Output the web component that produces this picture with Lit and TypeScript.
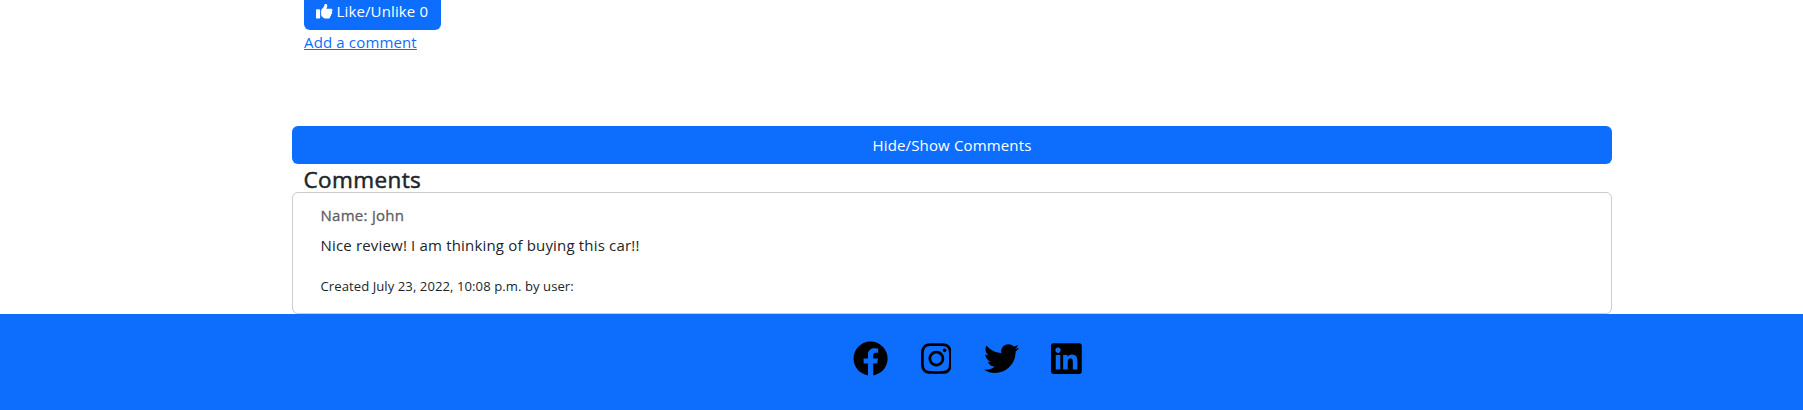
import { LitElement, html, css, svg } from "lit";
import { customElement, property, state } from "lit/decorators.js";

const ICONS: Record<string, { w: number; d: string }> = {
  like: {
    w: 512,
    d: "M313.4 32.9c26 5.2 42.9 30.5 37.7 56.5l-2.3 11.4c-5.3 26.7-15.1 52.1-28.8 75.2H464c26.5 0 48 21.5 48 48c0 18.5-10.5 34.6-25.9 42.6C497 275.4 504 288.9 504 304c0 23.4-16.8 42.9-38.9 47.1c4.4 7.3 6.9 15.8 6.9 24.9c0 21.3-13.9 39.4-33.1 45.6c.7 3.3 1.1 6.8 1.1 10.4c0 26.5-21.5 48-48 48H294.5c-19 0-37.5-5.6-53.3-16.1l-38.5-25.7C176 420.4 160 390.4 160 358.3V320 272 247.1c0-29.2 13.3-56.7 36-75l7.4-5.9c26.5-21.2 44.6-51 51.2-84.2l2.3-11.4c5.2-26 30.5-42.9 56.5-37.7zM32 192H96c17.7 0 32 14.3 32 32V448c0 17.7-14.3 32-32 32H32c-17.7 0-32-14.3-32-32V224c0-17.7 14.3-32 32-32z",
  },
  facebook: {
    w: 512,
    d: "M504 256C504 119 393 8 256 8S8 119 8 256c0 123.78 90.69 226.38 209.25 245V327.69h-63V256h63v-54.64c0-62.15 37-96.48 93.67-96.48 27.14 0 55.52 4.84 55.52 4.84v61h-31.28c-30.8 0-40.41 19.12-40.41 38.73V256h68.78l-11 71.69h-57.78V501C413.31 482.38 504 379.78 504 256z",
  },
  instagram: {
    w: 448,
    d: "M224.1 141c-63.6 0-114.9 51.3-114.9 114.9s51.3 114.9 114.9 114.9S339 319.5 339 255.9 287.7 141 224.1 141zm0 189.6c-41.1 0-74.7-33.5-74.7-74.7s33.5-74.7 74.7-74.7 74.7 33.5 74.7 74.7-33.6 74.7-74.7 74.7zm146.4-194.3c0 14.9-12 26.8-26.8 26.8-14.9 0-26.8-12-26.8-26.8s12-26.8 26.8-26.8 26.8 12 26.8 26.8zm76.1 27.2c-1.7-35.9-9.9-67.7-36.2-93.9-26.2-26.2-58-34.4-93.9-36.2-37-2.1-147.9-2.1-184.9 0-35.8 1.7-67.6 9.9-93.9 36.1s-34.4 58-36.2 93.9c-2.1 37-2.1 147.9 0 184.9 1.7 35.9 9.9 67.7 36.2 93.9s58 34.4 93.9 36.2c37 2.1 147.9 2.1 184.9 0 35.9-1.7 67.7-9.9 93.9-36.2 26.2-26.2 34.4-58 36.2-93.9 2.1-37 2.1-147.8 0-184.8zM398.8 388c-7.8 19.6-22.9 34.7-42.6 42.6-29.5 11.7-99.5 9-132.1 9s-102.7 2.6-132.1-9c-19.6-7.8-34.7-22.9-42.6-42.6-11.7-29.5-9-99.5-9-132.1s-2.6-102.7 9-132.1c7.8-19.6 22.9-34.7 42.6-42.6 29.5-11.7 99.5-9 132.1-9s102.7-2.6 132.1 9c19.6 7.8 34.7 22.9 42.6 42.6 11.7 29.5 9 99.5 9 132.1s2.7 102.7-9 132.1z",
  },
  twitter: {
    w: 512,
    d: "M459.37 151.716c.325 4.548.325 9.097.325 13.645 0 138.72-105.583 298.558-298.558 298.558-59.452 0-114.68-17.219-161.137-47.106 8.447.974 16.568 1.299 25.34 1.299 49.055 0 94.213-16.568 130.274-44.832-46.132-.975-84.792-31.188-98.112-72.772 6.498.974 12.995 1.624 19.818 1.624 9.421 0 18.843-1.3 27.614-3.573-48.081-9.747-84.143-51.98-84.143-102.985v-1.299c13.969 7.797 30.214 12.67 47.431 13.319-28.264-18.843-46.781-51.005-46.781-87.391 0-19.492 5.197-37.36 14.294-52.954 51.655 63.675 129.3 105.258 216.365 109.807-1.624-7.797-2.599-15.918-2.599-24.04 0-57.828 46.782-104.934 104.934-104.934 30.213 0 57.502 12.67 76.67 33.137 23.715-4.548 46.456-13.32 66.599-25.34-7.798 24.366-24.366 44.833-46.132 57.827 21.117-2.273 41.584-8.122 60.426-16.243-14.292 20.791-32.161 39.308-52.628 54.253z",
  },
  linkedin: {
    w: 448,
    d: "M416 32H31.9C14.3 32 0 46.5 0 64.3v383.4C0 465.5 14.3 480 31.9 480H416c17.6 0 32-14.5 32-32.3V64.3c0-17.8-14.4-32.3-32-32.3zM135.4 416H69V202.2h66.5V416zm-33.2-243c-21.3 0-38.5-17.3-38.5-38.5S80.9 96 102.2 96c21.2 0 38.5 17.3 38.5 38.5 0 21.3-17.2 38.5-38.5 38.5zm282.1 243h-66.4V312c0-24.8-.5-56.7-34.5-56.7-34.6 0-39.9 27-39.9 54.9V416h-66.4V202.2h63.7v29.2h.9c8.9-16.8 30.6-34.5 62.9-34.5 67.2 0 79.7 44.3 79.7 101.9V416z",
  },
};

@customElement("fa-icon")
export class FaIcon extends LitElement {
  @property() name = "like";
  static styles = css`
    :host { display: block; height: 1em; flex: none; }
    svg { display: block; height: 1em; fill: currentColor; }
  `;
  render() {
    const icon = ICONS[this.name];
    return html`<svg viewBox="0 0 ${icon.w} 512" aria-hidden="true">${svg`<path d=${icon.d}></path>`}</svg>`;
  }
}

@customElement("app-root")
export class AppRoot extends LitElement {
  @state() likes = 0;
  @state() open = true;

  static styles = css`
    * { box-sizing: border-box; margin: 0; }
    :host {
      display: flex;
      flex-direction: column;
      height: 410px;
      overflow: hidden;
      background: #fff;
      color: #212529;
      font: 15px/24px "Open Sans", "Noto Sans", sans-serif;
    }
    .container { width: 1320px; margin-left: 292px; white-space: nowrap; }
    .col { padding-left: 12px; height: 126px; }
    button { border: 0; font: inherit; color: #fff; background: #0d6efd; cursor: pointer; }
    .like {
      display: flex;
      gap: 4px;
      width: 137px;
      height: 30px;
      padding: 0 0 0 12px;
      border-radius: 0 0 6px 6px;
      letter-spacing: 0.13px;
    }
    .like fa-icon { font-size: 16.5px; margin-top: 2.7px; }
    .like-text { position: relative; top: -1px; }
    .add { display: block; width: max-content; color: #0d6efd; letter-spacing: 0.15px; text-underline-offset: 1px; }
    .toggle { display: block; width: 100%; height: 38px; border-radius: 6px; letter-spacing: 0.15px; padding: 0 0 1px; }
    h3 {
      height: 28px;
      padding-left: 11.5px;
      font-size: 22.5px;
      line-height: 31px;
      font-weight: 400;
      letter-spacing: 0.4px;
      -webkit-text-stroke: 0.5px currentColor;
    }
    .card { height: 122px; padding: 11px 27.5px; border: 1px solid #cccccd; border-radius: 6px; }
    .name {
      font-size: 15px;
      line-height: 22px;
      font-weight: 400;
      color: #5c6064;
      letter-spacing: 0.27px;
      -webkit-text-stroke: 0.3px currentColor;
    }
    .body { margin-top: 7px; letter-spacing: 0.175px; }
    .meta { margin-top: 18px; font-size: 13.1px; line-height: 22px; letter-spacing: 0.065px; }
    footer {
      flex: 1;
      display: flex;
      gap: 32.4px;
      padding: 26.6px 0 0 853px;
      background: #0d6efd;
      color: #000;
      font-size: 35.2px;
    }
  `;

  render() {
    return html`
      <main class="container">
        <div class="col">
          <button class="like" @click=${() => (this.likes = this.likes ? 0 : 1)}>
            <fa-icon name="like"></fa-icon><span class="like-text">Like/Unlike ${this.likes}</span>
          </button>
          <a class="add" href="#">Add a comment</a>
        </div>
        <button class="toggle" @click=${() => (this.open = !this.open)}>Hide/Show Comments</button>
        ${this.open
          ? html`<h3>Comments</h3>
              <article class="card">
                <h6 class="name">Name: john</h6>
                <p class="body">Nice review! I am thinking of buying this car!!</p>
                <p class="meta">Created July 23, 2022, 10:08 p.m. by user:</p>
              </article>`
          : null}
      </main>
      <footer>
        ${["facebook", "instagram", "twitter", "linkedin"].map((n) => html`<fa-icon name=${n}></fa-icon>`)}
      </footer>
    `;
  }
}
